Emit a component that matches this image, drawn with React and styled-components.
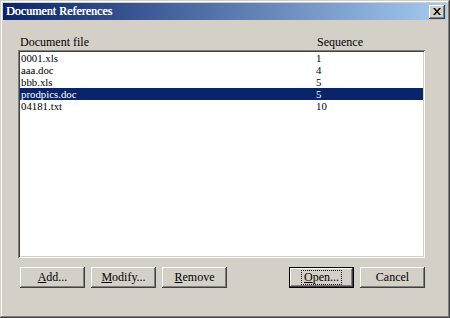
import React from 'react';
import styled, { createGlobalStyle } from 'styled-components';

const GlobalStyle = createGlobalStyle`
  html, body {
    margin: 0;
    padding: 0;
    background: #d4d0c8;
  }
  body {
    font-family: "Liberation Serif", "DejaVu Serif", serif;
    font-size: 12px;
  }
`;

const rows = [
  { file: '0001.xls', seq: '1' },
  { file: 'aaa.doc', seq: '4' },
  { file: 'bbb.xls', seq: '5' },
  { file: 'prodpics.doc', seq: '5', selected: true },
  { file: '04181.txt', seq: '10' },
];

const App = () => {
  return (
    <>
      <GlobalStyle />
      <Window>
        <TitleBar>
          <Title>Document References</Title>
          <CloseButton>
            <svg width="8" height="7" viewBox="0 0 8 7">
              <path d="M0 0h2l2 2.5L6 0h2L5 3.5 8 7H6L4 4.5 2 7H0l3-3.5z" fill="#000" />
            </svg>
          </CloseButton>
        </TitleBar>
        <Body>
          <HeaderRow>
            <span>Document file</span>
            <span>Sequence</span>
          </HeaderRow>
          <ListBox>
            {rows.map((r) => (
              <Row key={r.file} $selected={r.selected}>
                <span>{r.file}</span>
                <span>{r.seq}</span>
              </Row>
            ))}
          </ListBox>
          <ButtonRow>
            <Button><u>A</u>dd...</Button>
            <Button><u>M</u>odify...</Button>
            <Button><u>R</u>emove</Button>
            <Spacer />
            <Button $default><Focus><u>O</u>pen...</Focus></Button>
            <Button>Cancel</Button>
          </ButtonRow>
        </Body>
      </Window>
    </>
  );
};

const Window = styled.div`
  box-sizing: border-box;
  width: 450px;
  height: 318px;
  padding: 3px;
  background: #d4d0c8;
  box-shadow: inset -1px -1px #404040, inset 1px 1px #d4d0c8,
    inset -2px -2px #808080, inset 2px 2px #ffffff;
  display: flex;
  flex-direction: column;
`;

const TitleBar = styled.div`
  height: 17px;
  display: flex;
  align-items: center;
  justify-content: space-between;
  padding: 0 2px 0 3px;
  background: linear-gradient(to right, #0a246a, #a6caf0);
`;

const Title = styled.span`
  color: #ffffff;
  font-size: 12px;
  text-shadow: 0.4px 0 0 #ffffff;
`;

const CloseButton = styled.div`
  box-sizing: border-box;
  width: 16px;
  height: 14px;
  background: #d4d0c8;
  display: flex;
  align-items: center;
  justify-content: center;
  box-shadow: inset -1px -1px #404040, inset 1px 1px #ffffff,
    inset -2px -2px #808080;
`;

const Body = styled.div`
  flex: 1;
  display: flex;
  flex-direction: column;
  padding: 16px 22px 0 15px;
`;

const HeaderRow = styled.div`
  display: grid;
  grid-template-columns: 297px 1fr;
  padding-left: 2px;
  height: 13px;
  line-height: 13px;
  color: #000;
  margin-bottom: 1px;
`;

const ListBox = styled.div`
  box-sizing: border-box;
  height: 208px;
  background: #ffffff;
  padding: 2px;
  box-shadow: inset 1px 1px #808080, inset -1px -1px #ffffff,
    inset 2px 2px #404040, inset -2px -2px #d4d0c8;
`;

const Row = styled.div`
  display: grid;
  grid-template-columns: 295px 1fr;
  height: 12px;
  line-height: 12px;
  font-size: 10.8px;
  padding-left: 1px;
  color: ${(p) => (p.$selected ? '#ffffff' : '#000000')};
  background: ${(p) => (p.$selected ? '#0a246a' : 'transparent')};
`;

const ButtonRow = styled.div`
  display: flex;
  gap: 6px;
  margin-top: 9px;
  padding-left: 2px;
`;

const Spacer = styled.div`
  flex: 1;
`;

const Button = styled.div`
  box-sizing: border-box;
  width: 65px;
  height: 21px;
  display: flex;
  align-items: center;
  justify-content: center;
  color: #000;
  background: #d4d0c8;
  box-shadow: ${(p) =>
    p.$default
      ? 'inset 0 0 0 1px #000000, inset -2px -2px #404040, inset 2px 2px #ffffff, inset -3px -3px #808080'
      : 'inset -1px -1px #404040, inset 1px 1px #ffffff, inset -2px -2px #808080'};
`;

const Focus = styled.span`
  outline: 1px dotted #000;
  padding: 0 2px;
  line-height: 13px;
`;

export default App;
